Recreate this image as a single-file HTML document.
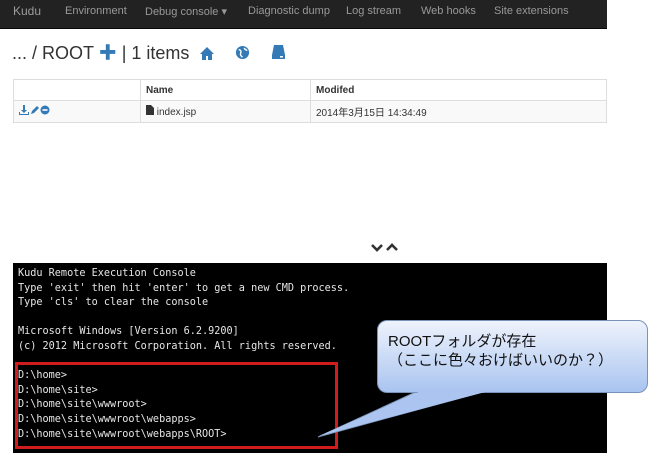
<!DOCTYPE html>
<html><head><meta charset="utf-8"><style>
*{margin:0;padding:0;box-sizing:border-box}
body{width:654px;height:456px;background:#fff;position:relative;overflow:hidden;font-family:"Liberation Sans","Noto Sans CJK JP",sans-serif}
.nav{position:absolute;left:0;top:0;width:607px;height:29px;background:#222;border-bottom:1px solid #080808}
.nav span{position:absolute;top:5px;font-size:11px;color:#999}
.title{position:absolute;left:12px;top:39px;font-size:18px;color:#333}
table{position:absolute;left:13px;top:79px;width:594px;border-collapse:collapse;font-size:10px;color:#333}
td{border:1px solid #ddd;height:22px;padding:0 5px}
tr.h td{font-weight:bold;height:21px}
tr.r td{background:#f9f9f9}
.con{position:absolute;left:13px;top:263px;width:594px;height:190px;background:#000;color:#e6e6e6;font-family:"DejaVu Sans Mono","Liberation Mono",monospace;font-size:10.2px;line-height:14.6px;padding:4px 0 0 5px;white-space:pre}
.red{position:absolute;left:15px;top:362px;width:323px;height:87px;border:3px solid #d01c1c}
.call{position:absolute;left:377px;top:320px;width:271px;height:73px;border:1px solid #7a93b8;border-radius:10px;background:linear-gradient(#eef3fc,#a9c4f0);font-size:15px;line-height:19px;color:#111;padding:11px 0 0 10px}
</style></head><body>
<div class="nav">
<span style="left:13px;color:#9d9d9d;font-size:12px;top:4px">Kudu</span>
<span style="left:65px">Environment</span>
<span style="left:145px">Debug console ▾</span>
<span style="left:248px">Diagnostic dump</span>
<span style="left:346px">Log stream</span>
<span style="left:421px">Web hooks</span>
<span style="left:494px">Site extensions</span>
</div>
<div class="title">... / ROOT <span style="color:#337ab7;font-weight:bold">✚</span> | 1 items</div>
<svg style="position:absolute;left:199px;top:45px" width="16" height="16" viewBox="0 0 16 16"><path d="M8 2L1 9h2v6h4v-4h2v4h4V9h2z" fill="#337ab7"/></svg>
<svg style="position:absolute;left:235px;top:45px" width="15" height="15" viewBox="0 0 16 16"><circle cx="8" cy="8" r="7" fill="#337ab7"/><path d="M4 5c2 0 3 2 2 4s1 3 2 4M10 3c0 2 2 2 3 3" stroke="#fff" stroke-width="1.5" fill="none"/></svg>
<svg style="position:absolute;left:271px;top:44px" width="15" height="16" viewBox="0 0 15 16"><path d="M3 1h9l2 10H1z" fill="#337ab7"/><rect x="1" y="11" width="13" height="4" fill="#337ab7"/><rect x="9" y="12" width="3" height="1.5" fill="#fff"/></svg>
<table>
<tr class="h"><td style="width:127px"></td><td style="width:170px">Name</td><td>Modifed</td></tr>
<tr class="r"><td><svg width="34" height="10" viewBox="0 0 34 10"><path d="M4 0h2v5h2L5 8 2 5h2zM0 7h1v2h8V7h1v3H0z" fill="#337ab7"/><path d="M12 9l1-3 5-5 2 2-5 5z" fill="#337ab7"/><circle cx="26" cy="5" r="4.5" fill="#337ab7"/><rect x="23.5" y="4.2" width="5" height="1.6" fill="#fff"/></svg></td><td><svg width="8" height="10" viewBox="0 0 8 10"><path d="M0 0h5l3 3v7H0z" fill="#333"/></svg> index.jsp</td><td>2014年3月15日 14:34:49</td></tr>
</table>
<svg style="position:absolute;left:371px;top:243px" width="28" height="9" viewBox="0 0 28 9"><path d="M1 2l5 5 5-5" stroke="#333" stroke-width="2.6" fill="none"/><path d="M16 7l5-5 5 5" stroke="#333" stroke-width="2.6" fill="none"/></svg>
<div class="con">Kudu Remote Execution Console
Type 'exit' then hit 'enter' to get a new CMD process.
Type 'cls' to clear the console

Microsoft Windows [Version 6.2.9200]
(c) 2012 Microsoft Corporation. All rights reserved.

D:\home>
D:\home\site>
D:\home\site\wwwroot>
D:\home\site\wwwroot\webapps>
D:\home\site\wwwroot\webapps\ROOT></div>
<div class="red"></div>
<svg style="position:absolute;left:0;top:0" width="654" height="456"><polygon points="420,390 490,390 318,437" fill="#b3cbf2" stroke="#7a93b8" stroke-width="1"/></svg>
<div class="call">ROOTフォルダが存在<br>（ここに色々おけばいいのか？）</div>
<svg style="position:absolute;left:0;top:0" width="654" height="456"><polygon points="421,391 489,391 319,436" fill="#abc5f0"/></svg>
</body></html>
